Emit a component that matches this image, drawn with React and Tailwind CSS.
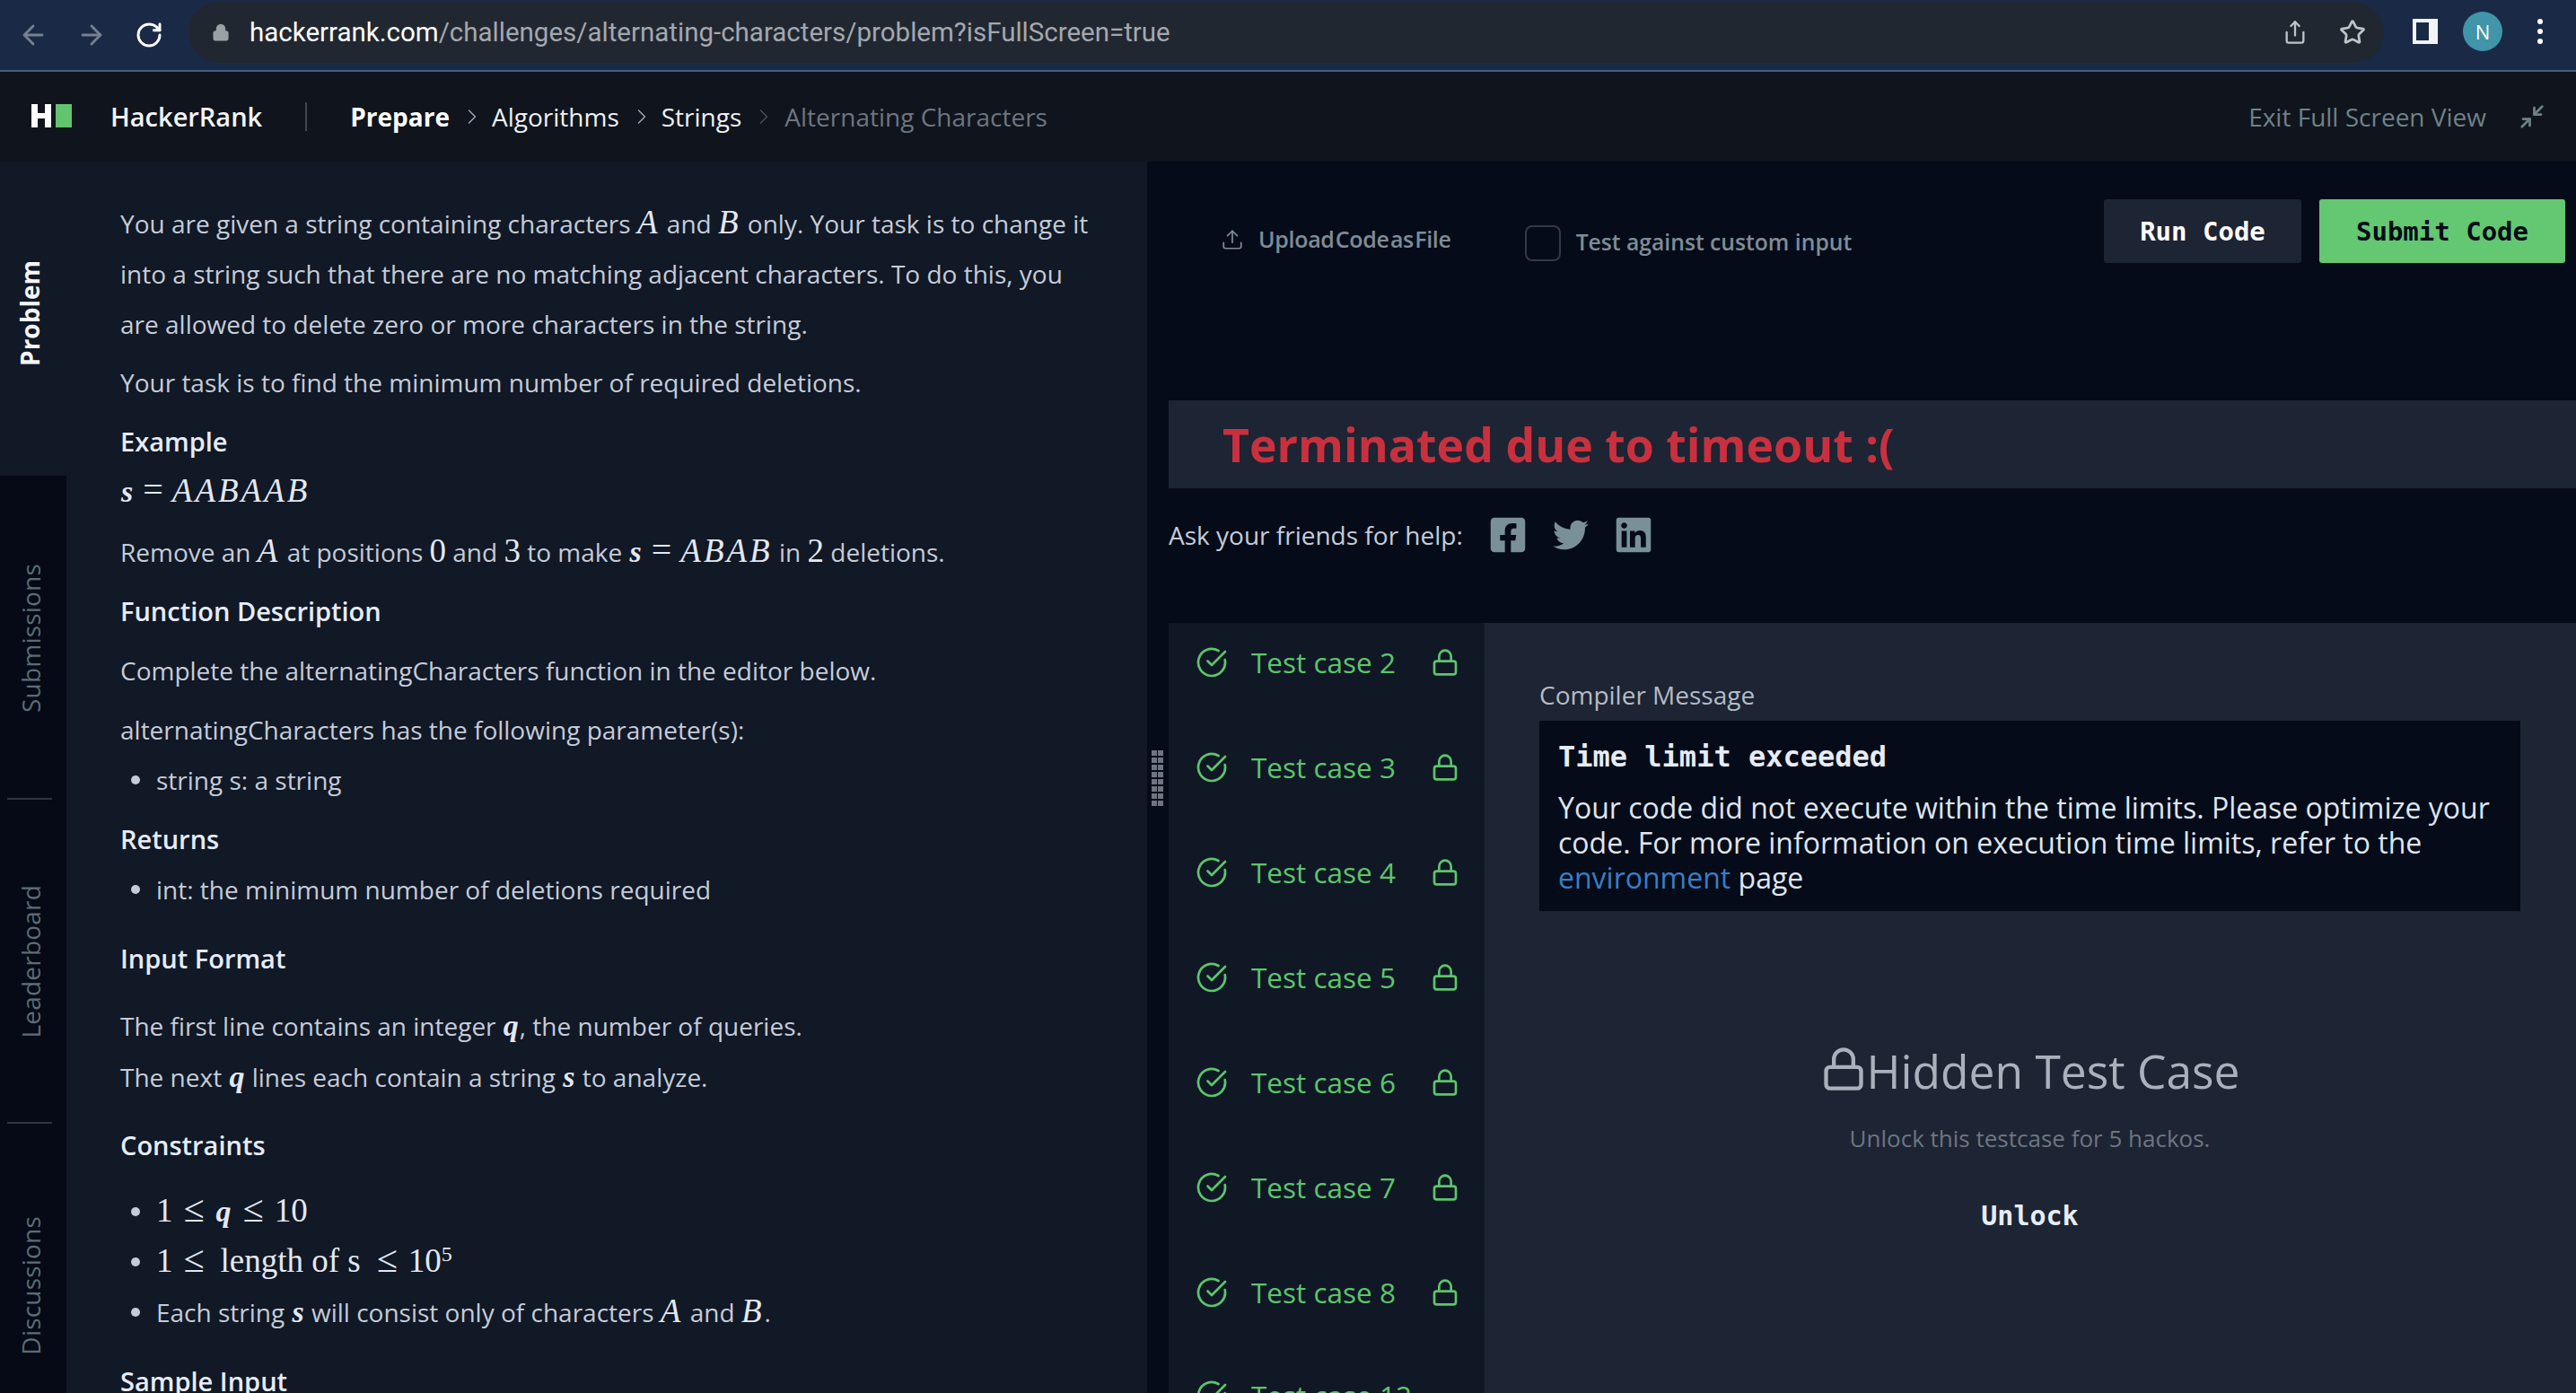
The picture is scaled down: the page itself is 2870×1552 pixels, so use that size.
import { ArrowLeft, ArrowRight, RotateCw, Share, Star, ChevronRight, Minimize2, Upload, CircleCheckBig, Lock } from "lucide-react";
import { FaFacebookSquare, FaTwitter, FaLinkedin } from "react-icons/fa";

const Mi = ({ children }) => <span className="font-['Liberation_Serif',serif] italic text-[37px] leading-[30px] tracking-[3px] text-[#e3e8f2]">{children}</span>;
const Ml = ({ children }) => <span className="font-['Liberation_Serif',serif] italic font-bold text-[34px] leading-[30px] mx-[1px] text-[#e3e8f2]">{children}</span>;
const Mn = ({ children }) => <span className="font-['Liberation_Serif',serif] text-[37px] leading-[30px] text-[#e3e8f2]">{children}</span>;
const Eq = () => <span className="font-['Liberation_Serif',serif] text-[40px] leading-[30px] mx-[10px] text-[#e3e8f2]">=</span>;
const Le = () => <span className="font-['Liberation_Serif',serif] text-[42px] leading-[30px] mx-[12px] text-[#e3e8f2]">≤</span>;

const Bullet = ({ children, className }) => (
    <div className={`flex items-center pl-[12px] leading-[56px] ${className}`}>
        <span className="w-[10px] h-[10px] rounded-full bg-[#c5ccd8] mr-[18px]"></span>
        <span>{children}</span>
    </div>
);

const Heading = ({ children, className }) => (
    <div className={`leading-[56px] text-[29px] font-semibold text-[#e6ecf7] ${className}`}>{children}</div>
);

const SideTab = ({ label, divider }) => (
    <div className="h-[361px] shrink-0 relative flex items-center justify-center">
        <span className="[writing-mode:vertical-rl] rotate-180 text-[#5d6c74] text-[28px] tracking-[0.2px] mr-[6px]">{label}</span>
        {divider && <div className="absolute bottom-0 left-[8px] w-[50px] h-[2px] bg-[#2f3640]"></div>}
    </div>
);

const TestRow = ({ n, locked = true, className }) => (
    <div className={`h-[117px] shrink-0 flex items-center pl-[30px] text-[#5cc56c] ${className}`}>
        <CircleCheckBig size={36} strokeWidth={1.8} />
        <span className="ml-[26px] w-[200px] text-[31.5px]">Test case {n}</span>
        {locked && <Lock size={32} strokeWidth={2} />}
    </div>
);

export default function App() {
    return (
        <div className="h-screen w-full flex flex-col overflow-hidden bg-[#050b18] font-['Open_Sans',sans-serif]">
            {/* Browser bar */}
            <div className="h-[80px] shrink-0 bg-[#1a2a46] border-b-2 border-[#45607f] flex items-center pl-[20px] pr-[37px]">
                <ArrowLeft size={34} strokeWidth={2} className="text-[#77808e]" />
                <ArrowRight size={34} strokeWidth={2} className="text-[#77808e] ml-[31px]" />
                <RotateCw size={32} strokeWidth={2.2} className="text-white ml-[31px]" />
                <div className="ml-[28px] h-[68px] flex-1 -mt-[6px] rounded-full bg-[#212731] flex items-center pl-[26px] pr-[18px] font-['Roboto',sans-serif]">
                    <Lock size={20} strokeWidth={2.5} fill="#9aa0a6" className="text-[#9aa0a6]" />
                    <span className="ml-[22px] text-[29.5px] text-white">hackerrank.com<span className="text-[#a3a8ae]">/challenges/alternating-characters/problem?isFullScreen=true</span></span>
                    <Share size={28} strokeWidth={2} className="ml-auto text-[#bfc3c8]" />
                    <Star size={30} strokeWidth={2.2} className="ml-[35px] mr-[2px] text-[#bfc3c8]" />
                </div>
                <div className="ml-[32px] -mt-[8px] w-[28px] h-[28px] bg-[#f3f4f5] flex items-center">
                    <div className="ml-[4px] w-[14px] h-[20px] bg-[#1a2a46]"></div>
                </div>
                <div className="ml-[28px] -mt-[8px] w-[44px] h-[44px] rounded-full bg-[#4095a9] flex items-center justify-center text-white text-[22px]">N</div>
                <div className="ml-[39px] -mt-[8px] flex flex-col gap-[5px]">
                    <span className="w-[6px] h-[6px] rounded-full bg-white"></span>
                    <span className="w-[6px] h-[6px] rounded-full bg-white"></span>
                    <span className="w-[6px] h-[6px] rounded-full bg-white"></span>
                </div>
            </div>

            {/* Nav */}
            <div className="h-[100px] shrink-0 bg-[#10141d] flex items-center pl-[35px] pr-[34px] text-[28px]">
                <div className="flex items-center gap-[5px] -mt-[2px]">
                    <div className="relative w-[22px] h-[26px]">
                        <div className="absolute left-0 top-0 w-[7px] h-[26px] bg-white"></div>
                        <div className="absolute right-0 top-0 w-[7px] h-[26px] bg-white"></div>
                        <div className="absolute left-0 top-[10px] w-[22px] h-[6px] bg-white"></div>
                    </div>
                    <div className="w-[18px] h-[26px] bg-[#62c46f]"></div>
                </div>
                <span className="ml-[43px] font-semibold text-[29px] text-[#f3f5f8]">HackerRank</span>
                <div className="ml-[48px] w-[2px] h-[32px] bg-[#3f4853]"></div>
                <span className="ml-[48px] font-bold text-white">Prepare</span>
                <ChevronRight size={28} strokeWidth={1.2} className="ml-[11px] text-[#a5abb2]" />
                <span className="ml-[8px] text-[#eef0f3]">Algorithms</span>
                <ChevronRight size={28} strokeWidth={1.2} className="ml-[11px] text-[#a5abb2]" />
                <span className="ml-[8px] text-[#eef0f3]">Strings</span>
                <ChevronRight size={28} strokeWidth={1.2} className="ml-[11px] text-[#4a525c]" />
                <span className="ml-[9px] text-[#6d7680]">Alternating Characters</span>
                <span className="ml-auto text-[#6e8288]">Exit Full Screen View</span>
                <Minimize2 size={30} strokeWidth={2.2} className="ml-[36px] text-[#6e8288]" />
            </div>

            <div className="flex-1 min-h-0 flex">
                {/* Side tabs */}
                <div className="w-[74px] shrink-0 flex flex-col bg-[#050a16]">
                    <div className="h-[350px] shrink-0 bg-[#111826] flex items-start justify-center">
                        <span className="[writing-mode:vertical-rl] rotate-180 mt-[110px] text-[#f3f5f8] text-[28px] font-bold mr-[8px]">Problem</span>
                    </div>
                    <SideTab label="Submissions" divider />
                    <SideTab label="Leaderboard" divider />
                    <SideTab label="Discussions" />
                </div>

                {/* Problem statement */}
                <div className="w-[1204px] shrink-0 bg-[#111826] pl-[60px] pt-[41px] overflow-hidden text-[28px] text-[#c5ccd8]">
                    <div className="leading-[56px]">You are given a string containing characters <Mi>A</Mi> and <Mi>B</Mi> only. Your task is to change it</div>
                    <div className="leading-[56px]">into a string such that there are no matching adjacent characters. To do this, you</div>
                    <div className="leading-[56px]">are allowed to delete zero or more characters in the string.</div>
                    <div className="leading-[56px] mt-[9px]">Your task is to find the minimum number of required deletions.</div>
                    <Heading className="mt-[10px]">Example</Heading>
                    <div className="leading-[56px]"><Ml>s</Ml><Eq /><Mi>AABAAB</Mi></div>
                    <div className="leading-[56px] mt-[11px]">Remove an <Mi>A</Mi> at positions <Mn>0</Mn> and <Mn>3</Mn> to make <Ml>s</Ml><Eq /><Mi>ABAB</Mi> in <Mn>2</Mn> deletions.</div>
                    <Heading className="mt-[10px]">Function Description</Heading>
                    <div className="leading-[56px] mt-[10px]">Complete the alternatingCharacters function in the editor below.</div>
                    <div className="leading-[56px] mt-[10px]">alternatingCharacters has the following parameter(s):</div>
                    <Bullet>string s: a string</Bullet>
                    <Heading className="mt-[10px]">Returns</Heading>
                    <Bullet>int: the minimum number of deletions required</Bullet>
                    <Heading className="mt-[21px]">Input Format</Heading>
                    <div className="leading-[56px] mt-[19px]">The first line contains an integer <Ml>q</Ml>, the number of queries.</div>
                    <div className="leading-[56px] mt-[1px]">The next <Ml>q</Ml> lines each contain a string <Ml>s</Ml> to analyze.</div>
                    <Heading className="mt-[20px]">Constraints</Heading>
                    <Bullet className="mt-[18px]"><Mn>1</Mn><Le /><Ml>q</Ml><Le /><Mn>10</Mn></Bullet>
                    <Bullet><Mn>1</Mn><Le /><span className="ml-[6px]"></span><Mn>length of s</Mn><span className="ml-[6px]"></span><Le /><Mn>10</Mn><sup className="font-['Liberation_Serif',serif] text-[24px] text-[#e3e8f2]">5</sup></Bullet>
                    <Bullet>Each string <Ml>s</Ml> will consist only of characters <Mi>A</Mi> and <Mi>B</Mi>.</Bullet>
                    <Heading className="mt-[21px]">Sample Input</Heading>
                </div>

                {/* Splitter */}
                <div className="relative w-[24px] shrink-0 bg-[#050b18]">
                    <svg className="absolute left-[5px] top-[656px]" width="13" height="62" viewBox="0 0 13 62">
                        <defs>
                            <pattern id="grip" width="13" height="8" patternUnits="userSpaceOnUse">
                                <rect width="6" height="6" fill="#6d7680" />
                                <rect x="7" width="6" height="6" fill="#6d7680" />
                            </pattern>
                        </defs>
                        <rect width="13" height="62" fill="url(#grip)" />
                    </svg>
                </div>

                {/* Results */}
                <div className="flex-1 min-w-0 flex flex-col">
                    <div className="h-[266px] shrink-0 flex items-start">
                        <div className="flex items-center ml-[58px] mt-[66px] h-[42px] text-[#7f8c96] text-[25px] font-semibold">
                            <Upload size={26} strokeWidth={1.6} />
                            <span className="ml-[16px] tracking-[-0.3px] [word-spacing:-5px]">Upload Code as File</span>
                        </div>
                        <div className="ml-[82px] mt-[71px] w-[40px] h-[40px] rounded-[8px] border-2 border-[#333a44]"></div>
                        <span className="ml-[17px] mt-[70px] text-[24.7px] font-semibold text-[#7f8c96] leading-[40px]">Test against custom input</span>
                        <button className="ml-auto mt-[42px] w-[220px] h-[71px] rounded-[3px] bg-[#1d2433] text-white font-['DejaVu_Sans_Mono',monospace] font-bold text-[29px] pt-[2px]">Run Code</button>
                        <button className="ml-[20px] mr-[12px] mt-[42px] w-[274px] h-[71px] rounded-[3px] bg-[#64c771] text-[#050b18] font-['DejaVu_Sans_Mono',monospace] font-bold text-[29px] pt-[2px]">Submit Code</button>
                    </div>

                    <div className="h-[98px] shrink-0 bg-[#1d2433] flex items-center pl-[60px] pt-[2px]">
                        <span className="text-[51.8px] font-bold text-[#c9303e]">Terminated due to timeout :(</span>
                    </div>

                    <div className="mt-[33px] flex items-center h-[38px] text-[#c5ccd8] text-[28px]">
                        <span>Ask your friends for help:</span>
                        <FaFacebookSquare size={44} className="ml-[28px] text-[#7a9099]" />
                        <FaTwitter size={40} className="ml-[28px] text-[#7a9099]" />
                        <FaLinkedin size={44} className="ml-[28px] text-[#7a9099]" />
                    </div>

                    <div className="mt-[79px] flex-1 min-h-0 flex">
                        <div className="w-[352px] shrink-0 bg-[#111825] overflow-hidden flex flex-col">
                            <div className="-mt-[15px]">
                                {[2, 3, 4, 5, 6, 7, 8].map((n) => <TestRow key={n} n={n} />)}
                                <TestRow n={12} locked={false} className="-mt-[2px]" />
                            </div>
                        </div>
                        <div className="flex-1 min-w-0 bg-[#1d2433] pl-[61px] pr-[62px] pt-[60px] flex flex-col">
                            <div className="text-[#b4bbc6] text-[28px] leading-[40px]">Compiler Message</div>
                            <div className="mt-[9px] h-[212px] bg-[#050b18] pl-[21px] pr-[16px] pt-[20px]">
                                <div className="font-['DejaVu_Sans_Mono',monospace] font-bold text-[32px] leading-[40px] text-[#e6ecf7]">Time limit exceeded</div>
                                <div className="mt-[17px] text-[32px] leading-[39px] text-[#dfe5f0]">Your code did not execute within the time limits. Please optimize your code. For more information on execution time limits, refer to the <span className="text-[#3a7ec6]">environment</span> page</div>
                            </div>
                            <div className="mt-[145px] flex items-center justify-center text-[51.5px] leading-[66px] text-[#a9b1bd]">
                                <Lock size={52} strokeWidth={2} className="-mt-[4px]" />
                                <span>Hidden Test Case</span>
                            </div>
                            <div className="mt-[23px] text-center text-[26px] text-[#6d7681]">Unlock this testcase for 5 hackos.</div>
                            <div className="mt-[44px] text-center font-['DejaVu_Sans_Mono',monospace] font-bold text-[30px] text-[#e6ecf7]">Unlock</div>
                        </div>
                    </div>
                </div>
            </div>
        </div>
    );
}
